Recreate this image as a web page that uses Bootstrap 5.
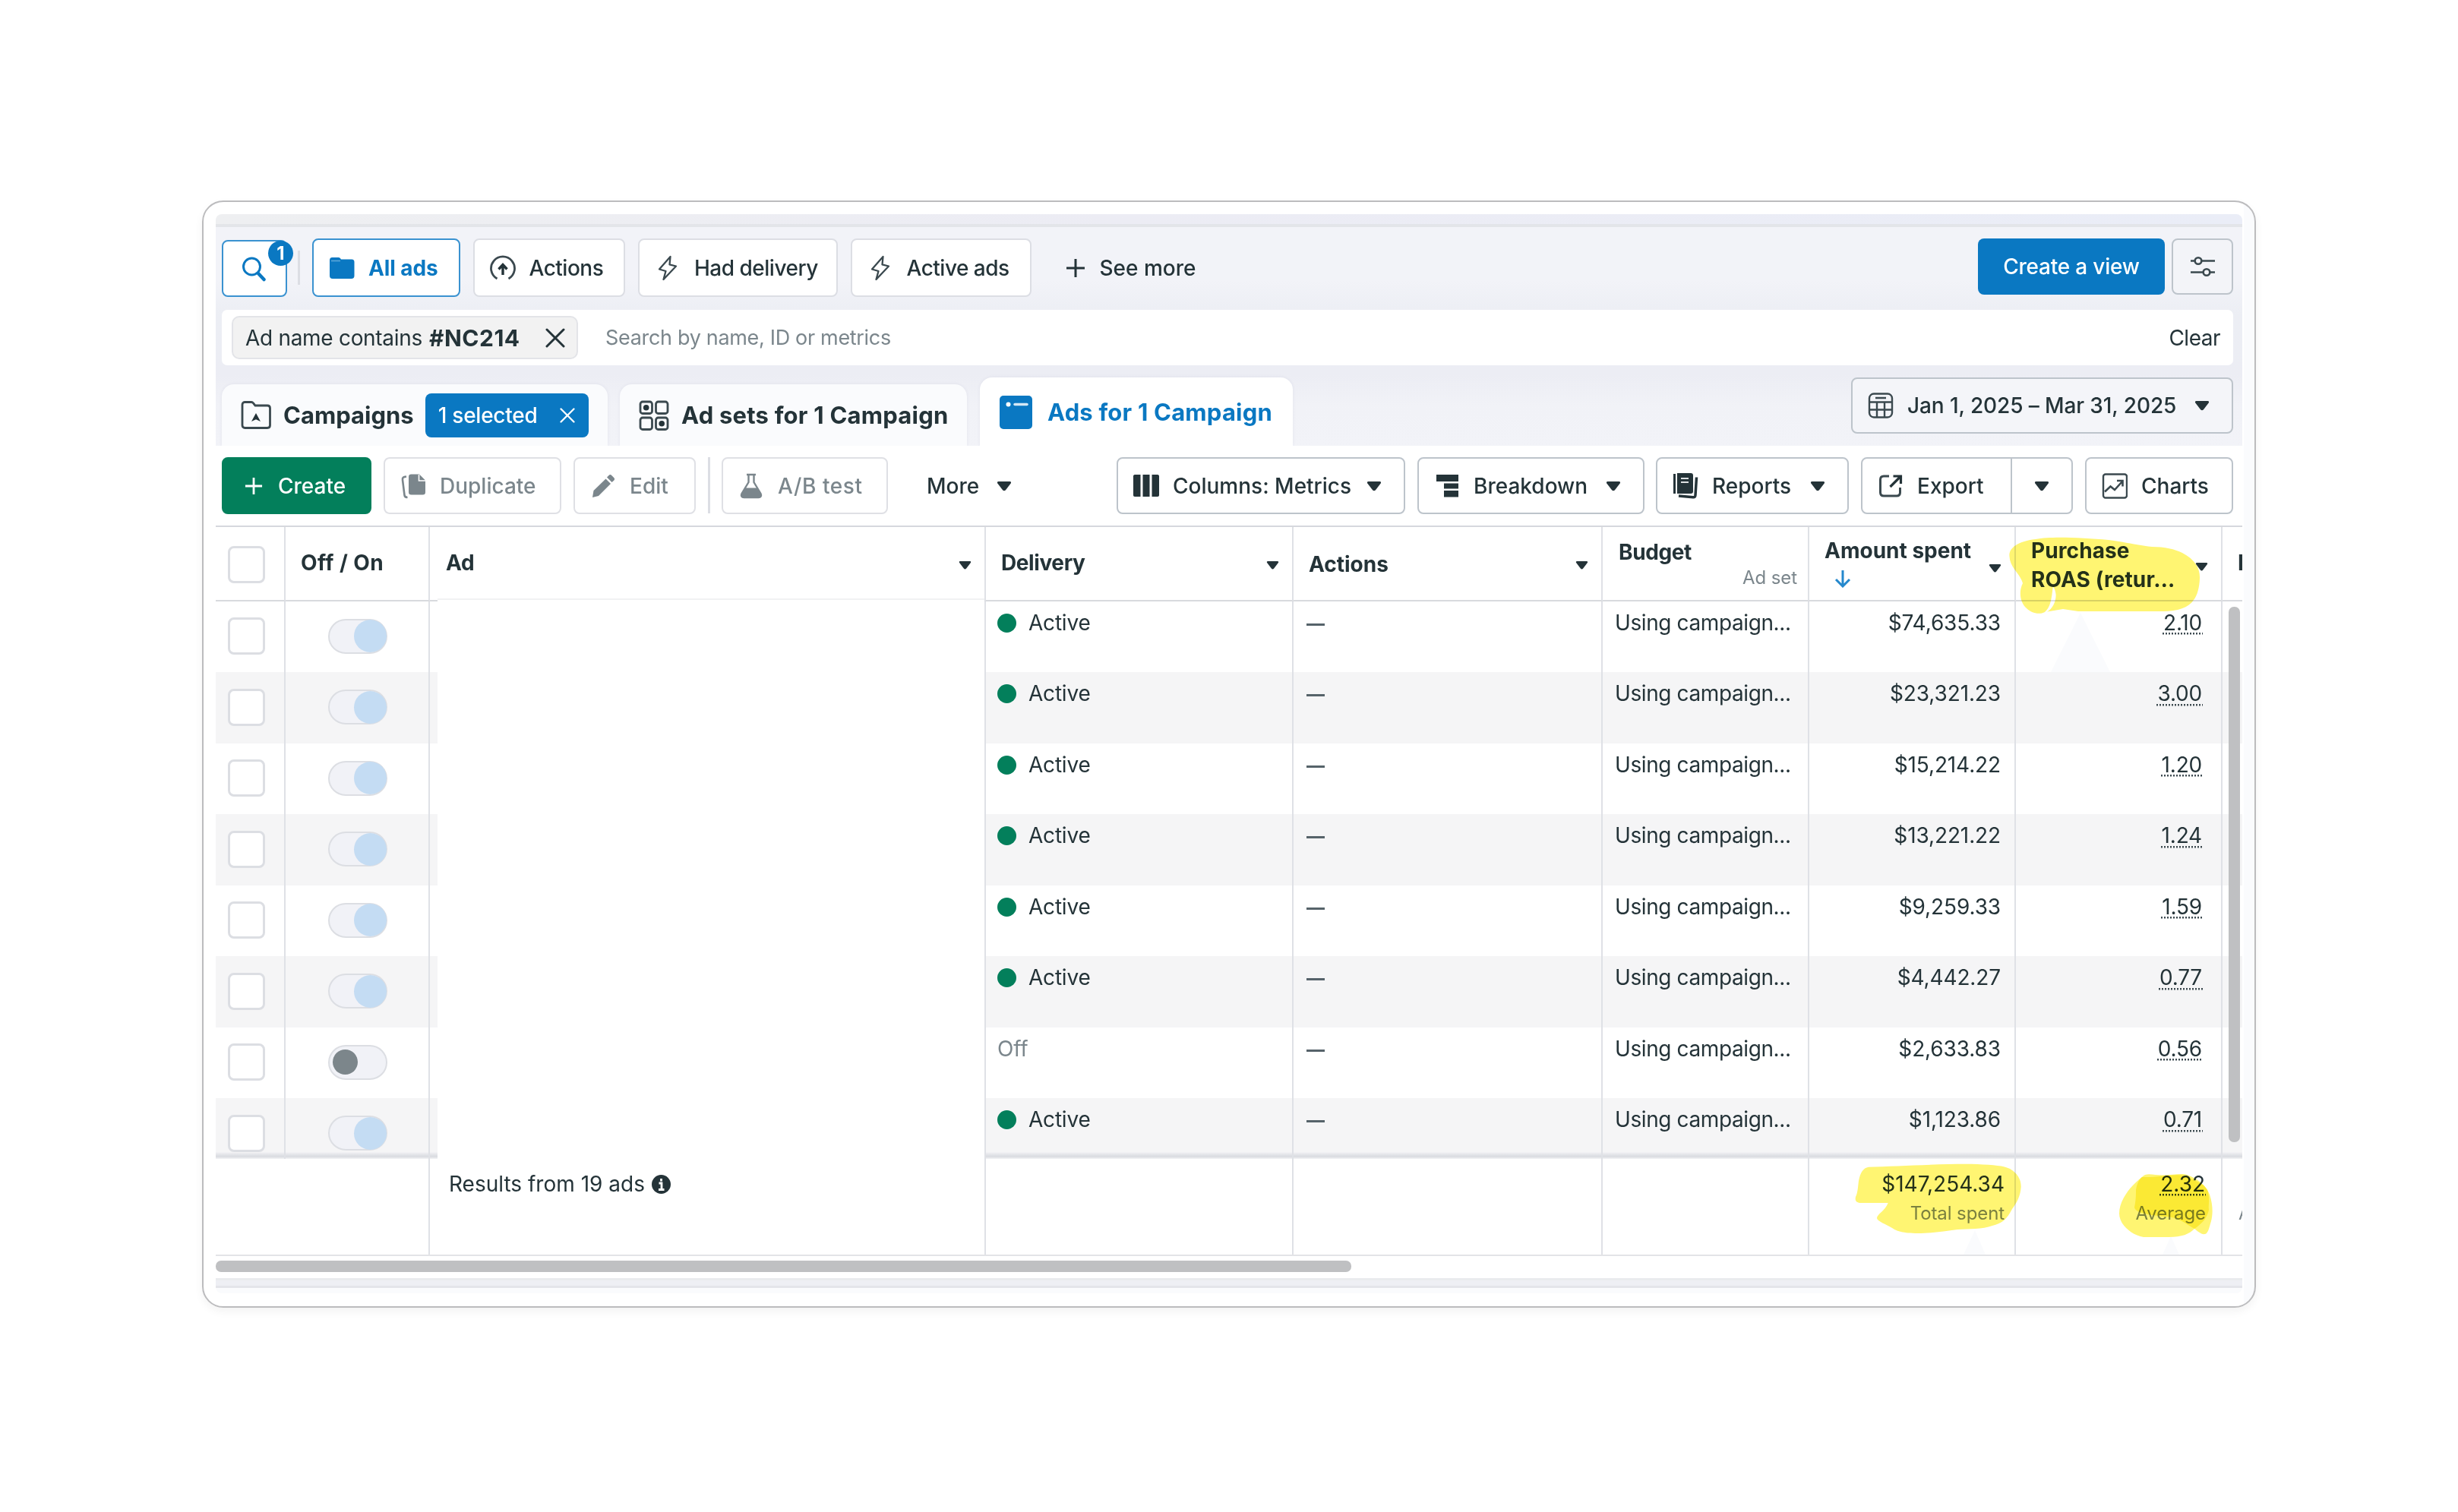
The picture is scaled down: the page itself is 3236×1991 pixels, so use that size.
<!DOCTYPE html>
<html lang="en">
<head>
<meta charset="utf-8">
<meta name="viewport" content="width=device-width, initial-scale=1">
<title>Ads Manager</title>
<link rel="stylesheet" href="https://cdn.jsdelivr.net/npm/bootstrap@5.3.0/dist/css/bootstrap.min.css">
<style>
  :root { --ink:#243338; --soft:#7b868c; --blue:#0a78c2; --green:#037f5b; --line:#dfe1e6; }
  body { background:#fff; color:var(--ink); font:400 28px/28px Inter,"Liberation Sans",sans-serif; padding-top:264px; overflow:hidden; height:1991px; }
  .frame { width:2704px; height:1458px; margin-left:266px; border:2px solid #bcbcbe; border-radius:28px; padding:16px; background:linear-gradient(90deg,#fff 2686px,#fafbfd 2686px); box-shadow:0 5px 12px rgba(0,0,0,.05); }
  .shot { width:2668px; height:1421px; border-radius:8px; background:#fff; white-space:nowrap; }
  .strip { height:17px; background:linear-gradient(90deg,#eeeff1,#ececf4 45%,#eaedf7); border-bottom:4px solid #e3e5e9; }
  .head-zone { height:288px; padding:15px 12px 0 8px; background:linear-gradient(#f2f3f8 0,#f2f3f8 70px,#eceef4 115px,#ecedf4 195px,#f1f2f7 235px,#f2f3f8); }
  .tool { height:75px; padding:0 20px; border:2px solid #bdc4cb; border-radius:8px; background:#fff; font-weight:500; display:flex; align-items:center; flex:none; color:var(--ink); }
  .tool > svg:not(.caret) { width:34px; height:34px; flex:none; margin-right:18px; }
  .pale { border-color:#dcdee4; }
  .off-tool { border-color:#dfe0e5; color:var(--soft); }
  .tight { letter-spacing:-.5px; }
  .caret { width:20px; height:14px; flex:none; margin-left:auto; margin-right:9px; }
  .caret-sm { width:17px; height:12px; }
  .views .tool { height:77px; }
  .search-tool { width:86px; margin-top:2px; border-color:#3a92d0; padding:0; justify-content:center; }
  .views .search-tool { height:75px; }
  .search-tool > svg:not(.caret) { margin:0 2px 0 0; }
  .count-dot { left:59px; top:-1px; width:33px; height:33px; line-height:33px; background:var(--blue); color:#fff; font-weight:700; font-size:24px; }
  .vline { width:3px; background:#dcdee4; flex:none; }
  .tall { height:74px; }
  .after-search { margin:16px 16px 16px 14px; }
  .w-all { width:195px; margin-right:16.5px; border-color:#3a92d0; color:var(--blue); font-weight:700; letter-spacing:-.1px; }
  .w-act { width:200.5px; margin-right:17px; } .w-had { width:263px; margin-right:16.5px; } .w-ads { width:238px; }
  .see-more { height:77px; font-weight:500; margin-left:45px; }
  .see-more svg { width:26px; height:26px; margin-right:19px; }
  .view-btn { width:246px; height:74px; background:var(--blue); color:#fff; border-radius:8px; font-weight:500; letter-spacing:-.2px; }
  .views .slide-btn { width:81px; height:74px; margin-left:9px; background:#f3f4f8; padding:0; justify-content:center; }
  .slide-btn > svg:not(.caret) { margin:0; }
  .filterbar { height:73px; margin-top:17px; background:#fff; border-radius:7px; padding:0 17px 0 13px; }
  .chip { width:456px; height:57px; background:#f2f2f2; border:2px solid #e3e4e8; border-radius:10px; padding:0 15px 0 16px; letter-spacing:-.3px; }
  .chip b { font-size:30px; letter-spacing:.5px; font-weight:700; margin-left:9px; }
  .chip svg { width:26px; height:26px; margin-left:auto; }
  .hint { font-size:27px; letter-spacing:-.32px; color:var(--soft); margin-left:36px; }
  .tabrow { height:90px; margin-top:16px; }
  .tab { height:81px; background:#fafbfd; border-radius:16px 16px 0 0; font-weight:700; font-size:31px; flex:none; box-shadow:0 0 4px rgba(60,70,110,.08); clip-path:inset(-4px -4px 0 -4px); }
  .tab-a { width:508px; padding-left:24px; margin-right:16px; } .tab-a > svg { width:42px; height:40px; margin-right:15px; }
  .tab-b { width:457px; padding-left:24px; margin-right:17px; letter-spacing:.22px; } .tab-b > svg { width:42px; height:42px; margin-right:15px; }
  .tab-c { width:412px; height:90px; background:#fff; color:var(--blue); padding:1px 0 0 26px; letter-spacing:.2px; } .tab-c > svg { width:43px; height:44px; margin-right:20px; }
  .pill { width:215px; height:58px; margin-left:15px; background:var(--blue); color:#fff; border-radius:8px; font-size:28px; font-weight:500; letter-spacing:-.25px; padding:0 18px 0 17px; }
  .pill svg { width:20px; height:20px; margin-left:auto; }
  .date-tool { width:503px; height:74px; background:#f4f5f9; letter-spacing:-.1px; }
  .toolbar-row { height:107px; padding:15px 12px 0 8px; border-bottom:2px solid #d6d8dd; border-radius:8px 8px 0 0; background:#fff; margin-top:0; }
  .w-create { width:197px; background:var(--green); border-color:var(--green); color:#fff; margin-right:16px; }
  .w-create > svg:not(.caret) { width:24px; height:24px; margin:0 20px 0 8px; }
  .w-dup { width:234px; margin-right:16px; } .w-edit { width:161px; margin-right:16px; } .w-ab { width:219px; margin-left:15px; letter-spacing:.6px; }
  .more { width:150px; height:75px; margin-left:51px; font-weight:500; } .more .caret { margin-left:23px; margin-right:0; }
  .w-col { width:380px; margin-right:16px; } .w-brk { width:299px; margin-right:15px; } .w-rep { width:254px; margin-right:16px; }
  .w-exp { width:199px; border-radius:8px 0 0 8px; } .w-expc { width:82px; border-radius:0 8px 8px 0; margin-left:-2px; margin-right:16px; padding:0; justify-content:center; } .w-expc .caret { margin:0; } .w-chart { width:195px; }
  .grid-row { height:93.5px; }
  .grid-row:nth-child(odd) { background:#f5f5f6; }
  .hd.grid-row { height:97.5px; background:#fff; font-weight:700; }
  .cellx { border-right:2px solid var(--line); flex:none; position:relative; padding:14px 16px 0 16px; letter-spacing:-.2px; }
  .hd .cellx { border-bottom:2px solid #d8dade; padding-top:33px; padding-left:20px; }
  .c1 { width:92px; } .c2 { width:190px; } .c3 { width:732px; } .c4 { width:405px; } .c5 { width:407px; } .c6,.c7,.c8 { width:272px; } .c9 { width:26px; border-right:0; overflow:hidden; }
  .grid-row .c1 { padding:21.5px 0 0 16px; } .hd.grid-row .c1 { padding-top:25px; }
  .tick { width:49px; height:49px; border:3px solid #dcdee3; border-radius:8px; background:#fff; }
  .grid-row .c2 { padding:23px 0 0 56px; } .hd.grid-row .c2 { padding:33px 0 0 20px; letter-spacing:.4px; }
  .switchx { width:78px; height:46px; border:2px solid #dcdee3; border-radius:23px; background:#f1f2f7; position:relative; }
  .switchx i { position:absolute; width:43px; height:43px; border-radius:50%; background:#c4dcf3; right:-1px; top:-.5px; }
  .switchx.is-off i { width:33px; height:33px; left:4px; top:4.5px; right:auto; background:#7c868b; }
  .grid-row .c3 { padding:0 0 0 10px; } .hd.grid-row .c3 { padding:33px 0 0 21px; }
  .blank { background:#fff; height:100%; }
  .first .blank { margin-top:-4px; height:calc(100% + 4px); border-top:2px solid #f1f2f3; position:relative; }
  .hd .caret { position:absolute; right:17px; top:44px; margin:0; }
  .statdot { width:25px; height:25px; border-radius:50%; background:var(--green); display:inline-block; margin-right:16px; vertical-align:-3px; }
  .grid-row .c4 { padding-left:15px; } .hd.grid-row .c4 { padding-left:20px; letter-spacing:-.4px; }
  .muted { color:var(--soft); }
  .dashx { width:24px; height:3px; background:#56636a; margin:15px 0 0 1px; }
  .c5 { padding-left:16px; } .hd.grid-row .c5 { padding:35px 0 0 20px; letter-spacing:0; }
  .c6 { letter-spacing:-.4px; } .hd.grid-row .c6 { padding:19px 14px 0 21px; }
  .sub { font-size:24px; line-height:24px; margin-top:13px; color:var(--soft); font-weight:400; letter-spacing:-.1px; }
  .hd .sub { margin-top:8px; }
  .c7,.c8 { text-align:right; } .grid-row .c7 { padding-right:18px; letter-spacing:-.12px; } .grid-row .c8 { padding-right:24px; }
  .hd.grid-row .c7,.hd.grid-row .c8 { text-align:left; padding:12px 0 0 20px; line-height:38px; letter-spacing:0; }
  .hd.grid-row .c8 { letter-spacing:.1px; }
  .hd.grid-row .c7 .caret { top:48px; } .hd.grid-row .c8 .caret { top:46px; right:17px; }
  .sortx { width:22px; height:24px; position:absolute; left:33px; top:56px; }
  .dots { background:repeating-linear-gradient(90deg,#3e4b51 0 2px,transparent 2px 4px) 0 calc(100% - 1px)/100% 2.500px no-repeat; padding:0 1px; }
  .grid-row.last { height:80px; background:linear-gradient(#f5f5f6 0 71px,#e9eaee 73px,#d9dbe0 77px,#f3f4f6); }
  .totals { height:128px; border-bottom:2px solid #e3e4e7; }
  .totals .cellx { padding-top:18.5px; letter-spacing:0; }
  .totals .c1 { border:0; } .totals .c3 { padding-left:25px; } .totals .c7 { padding-right:13px; } .totals .c8 { padding-right:20px; } .totals .c9 { padding-left:21px; }
  .info { width:25px; height:25px; vertical-align:-3px; margin-left:1px; }
  .hscroll { width:1495px; height:15px; margin-top:6px; border-radius:7px; background:#bfc0c2; }
  .base1 { margin-top:8px; height:13px; background:#eeeff4; border-bottom:3px solid #e4e5ea; border-top:3px solid #eaebee; }
  .base2 { height:7px; background:#fafbfd; }
  .vscroll { left:2650px; top:517px; width:15px; height:705px; border-radius:7px; background:#bfc0c2; }
  .marker { left:0; top:0; width:2668px; height:1421px; mix-blend-mode:multiply; pointer-events:none; }
</style>
</head>
<body>
<svg width="0" height="0" class="position-absolute">
  <symbol id="tri" viewBox="0 0 20 14"><path d="M2.5 1h15c1.500 0 2 1.300 1.200 2.400L12 12.200c-1.200 1.500-2.800 1.500-4 0L1.300 3.400C.5 2.300 1 1 2.500 1z" fill="#243338"/></symbol>
  <symbol id="bolt" viewBox="0 0 34 34"><path d="M20.500 2 6 18.500l8.500 2.500L11.500 32 28 14.500l-8.500-2.200z" fill="none" stroke="#3b494f" stroke-width="2.300" stroke-linejoin="round"/></symbol>
  <symbol id="ex" viewBox="0 0 26 26"><path d="M2 2l22 22M24 2 2 24" fill="none" stroke="currentColor" stroke-width="3" stroke-linecap="round"/></symbol>
  <symbol id="plus" viewBox="0 0 26 26"><path d="M13 1v24M1 13h24" fill="none" stroke="currentColor" stroke-width="3"/></symbol>
</svg>

<main class="frame">
 <div class="shot position-relative overflow-hidden">
  <div class="strip"></div>
  <header class="head-zone">
    <div class="views d-flex">
      <div class="tool search-tool position-relative">
        <svg viewBox="0 0 34 34"><circle cx="14.500" cy="14" r="11" fill="none" stroke="#0a78c2" stroke-width="3"/><path d="M23 23 30.500 31" stroke="#0a78c2" stroke-width="4.500" stroke-linecap="round"/></svg>
        <span class="count-dot position-absolute rounded-circle text-center">1</span>
      </div>
      <span class="vline after-search"></span>
      <div class="tool w-all"><svg viewBox="0 0 34 34"><path d="M1 7c0-2.500 1-4 3.500-4h8c2 0 2.500 1 3.500 2.500H30c2.500 0 3.500 1.200 3.500 3.500v18c0 2.500-1.200 4-4 4H5c-2.800 0-4-1.500-4-4z" fill="#0a78c2"/><path d="M3 7.500h12" stroke="#5fa8da" stroke-width="1.500"/></svg>All ads</div>
      <div class="tool pale tight w-act"><svg viewBox="0 0 34 34"><path d="M9.500 31A15.500 15.500 0 1 1 24.500 31" fill="none" stroke="#3b494f" stroke-width="2.800"/><path d="M17 26V13M11.500 18.500 17 12.500l5.500 6" fill="none" stroke="#243338" stroke-width="3.400"/></svg>Actions</div>
      <div class="tool pale tight w-had"><svg><use href="#bolt"/></svg>Had delivery</div>
      <div class="tool pale tight w-ads"><svg><use href="#bolt"/></svg>Active ads</div>
      <div class="see-more d-flex align-items-center"><svg><use href="#plus"/></svg>See more</div>
      <div class="view-btn ms-auto d-flex align-items-center justify-content-center">Create a view</div>
      <div class="tool slide-btn"><svg viewBox="0 0 34 34"><g fill="none" stroke="#3b494f" stroke-width="2.600"><path d="M1 9.500h5M16 9.500h17M1 24.500h16M27 24.500h6"/><circle cx="11" cy="9.500" r="4.300"/><circle cx="22" cy="24.500" r="4.300"/></g></svg></div>
    </div>
    <div class="filterbar d-flex align-items-center">
      <div class="chip d-flex align-items-center">Ad name contains<b>#NC214</b><svg><use href="#ex"/></svg></div>
      <span class="hint">Search by name, ID or metrics</span>
      <span class="ms-auto tight">Clear</span>
    </div>
    <div class="tabrow d-flex align-items-end">
      <div class="tab tab-a d-flex align-items-center">
        <svg viewBox="0 0 42 40"><path d="M3 33V6c0-2 1-3.500 3-3.500h9c1.500 0 2 .8 3 2l2 2.500h16c2 0 3.500 1.300 3.500 3.500V33c0 2-1.300 3.500-3.500 3.500H6.500C4.300 36.500 3 35 3 33z" fill="none" stroke="#3b494f" stroke-width="2.800"/><path d="M21 17l6 11-6-2.800-6 2.800z" fill="#243338"/></svg>
        <span>Campaigns</span>
        <div class="pill d-flex align-items-center">1 selected<svg viewBox="0 0 26 26"><use href="#ex"/></svg></div>
      </div>
      <div class="tab tab-b d-flex align-items-center">
        <svg viewBox="0 0 42 42"><g fill="none" stroke="#3b494f" stroke-width="2.800"><rect x="3" y="3" width="15.500" height="15.500" rx="3"/><rect x="23.500" y="3" width="15.500" height="15.500" rx="3"/><rect x="3" y="24" width="15.500" height="15.500" rx="3"/><rect x="23.500" y="24" width="15.500" height="15.500" rx="3"/></g><circle cx="10.700" cy="10.700" r="3.800" fill="#243338"/><circle cx="31.200" cy="31.700" r="3.800" fill="#243338"/></svg>
        <span>Ad sets for 1 Campaign</span>
      </div>
      <div class="tab tab-c d-flex align-items-center">
        <svg viewBox="0 0 43 44"><rect width="43" height="44" rx="5" fill="#0a78c2"/><circle cx="11.500" cy="11.500" r="3" fill="#fff"/><path d="M20 11.500h16" stroke="#d5e8f6" stroke-width="3.500" stroke-linecap="round"/></svg>
        <span>Ads for 1 Campaign</span>
      </div>
      <div class="tool date-tool ms-auto align-self-start"><svg viewBox="0 0 34 34"><g fill="none" stroke="#3b494f" stroke-width="2.400"><rect x="2" y="1.500" width="30" height="31" rx="6"/><path d="M2 12.500h30M2 22.500h30M12 12.500v20M22 12.500v20M10 7h14"/></g></svg>Jan 1, 2025 – Mar 31, 2025<svg class="caret"><use href="#tri"/></svg></div>
    </div>
  </header>

  <nav class="toolbar-row d-flex">
    <div class="tool w-create"><svg viewBox="0 0 26 26"><use href="#plus"/></svg>Create</div>
    <div class="tool off-tool w-dup"><svg viewBox="0 0 34 34"><path d="M8 4.500C4 5 2.500 6 3 9l2.500 20c.3 2.300 1.500 3 4 2.800" fill="none" stroke="#7b868c" stroke-width="2.600"/><path d="M14.500 1.500H25l8 8V25c0 2.500-1 3.500-3.500 3.500h-15c-2.500 0-3.500-1-3.500-3.500V5c0-2.500 1-3.500 3.500-3.500z" fill="#7b868c"/><path d="M24.500 2v8H33" fill="none" stroke="#fff" stroke-width="1.600"/></svg>Duplicate</div>
    <div class="tool off-tool w-edit"><svg viewBox="0 0 34 34"><path d="M3 32l1.500-9L20.500 7.500l6.500 6.500L11 30z" fill="#7b868c"/><path d="M22 5.500l2.500-2.500c1.200-1.200 2.500-1.200 3.700 0l3 3c1.200 1.200 1.200 2.500 0 3.700L28.500 12z" fill="#7b868c"/></svg>Edit</div>
    <span class="vline tall"></span>
    <div class="tool off-tool w-ab"><svg viewBox="0 0 34 34"><path d="M11 2h12M13.500 2v10L4.500 27c-1.500 3 0 5 3 5h19c3 0 4.500-2 3-5l-9-15V2" fill="none" stroke="#7b868c" stroke-width="2.400"/><path d="M9.500 19.500h15L30 28c.5 2.500-.5 4-3 4H7c-2.500 0-3.500-1.500-3-4z" fill="#7b868c"/></svg>A/B test</div>
    <div class="more d-flex align-items-center">More<svg class="caret"><use href="#tri"/></svg></div>
    <div class="tool w-col ms-auto"><svg viewBox="0 0 34 34"><path d="M0 4c0-1 .7-2 2-2h7.500v29H2c-1.300 0-2-1-2-2zM12.500 2h9v29h-9zM24.500 2H32c1.300 0 2 1 2 2v25c0 1-.7 2-2 2h-7.500z" fill="#243338"/></svg>Columns: Metrics<svg class="caret"><use href="#tri"/></svg></div>
    <div class="tool w-brk"><svg viewBox="0 0 34 34"><path d="M3 2h29v9H3zM13 13.500h19v7H13zM13 23h19v8.500H13z" fill="#243338"/></svg>Breakdown<svg class="caret"><use href="#tri"/></svg></div>
    <div class="tool w-rep"><svg viewBox="0 0 34 34"><path d="M2.500 1v26" stroke="#243338" stroke-width="3"/><path d="M6 0h18c2 0 3 1 3 3v21c0 2-1 3-3 3H6z" fill="#243338"/><path d="M11 7h10M11 12h10" stroke="#dde1e3" stroke-width="2.200"/><path d="M31.500 5.500 30 29c-.1 2-1 3-3 2.800L8 30" fill="none" stroke="#243338" stroke-width="3.500"/></svg>Reports<svg class="caret"><use href="#tri"/></svg></div>
    <div class="tool w-exp"><svg viewBox="0 0 34 34"><path d="M15 4H8C5 4 3.500 5.500 3.500 8.500v17c0 3 1.500 4.500 4.500 4.500h17c3 0 4.500-1.500 4.500-4.500V19" fill="none" stroke="#3b494f" stroke-width="3"/><path d="M16.500 18 30 4.500M20.500 4H30.500v10" fill="none" stroke="#243338" stroke-width="3.200"/></svg>Export</div>
    <div class="tool w-expc"><svg class="caret"><use href="#tri"/></svg></div>
    <div class="tool w-chart"><svg viewBox="0 0 34 34"><rect x="2" y="1.500" width="31" height="31" rx="3" fill="none" stroke="#3b494f" stroke-width="2.400"/><path d="M4 24.500l7.500-7 5.500 4.500L27 11M20 10h7.500v7.500" fill="none" stroke="#3b494f" stroke-width="2.600"/></svg>Charts</div>
  </nav>

  <section id="grid">
    <div class="grid-row hd d-flex">
      <div class="cellx c1"><div class="tick"></div></div>
      <div class="cellx c2">Off / On</div>
      <div class="cellx c3">Ad<svg class="caret caret-sm" viewBox="0 0 20 14"><use href="#tri"/></svg></div>
      <div class="cellx c4">Delivery<svg class="caret caret-sm" viewBox="0 0 20 14"><use href="#tri"/></svg></div>
      <div class="cellx c5">Actions<svg class="caret caret-sm" viewBox="0 0 20 14"><use href="#tri"/></svg></div>
      <div class="cellx c6">Budget<div class="sub text-end">Ad set</div></div>
      <div class="cellx c7">Amount spent<svg class="sortx" viewBox="0 0 22 24"><path d="M11 1v21M2 13l9 9 9-9" fill="none" stroke="#2588cd" stroke-width="3"/></svg><svg class="caret caret-sm" viewBox="0 0 20 14"><use href="#tri"/></svg></div>
      <div class="cellx c8">Purchase<br>ROAS (retur…<svg class="caret caret-sm" viewBox="0 0 20 14"><use href="#tri"/></svg></div>
      <div class="cellx c9">I</div>
    </div>
  </section>

  <footer class="totals d-flex">
    <div class="cellx c1"></div><div class="cellx c2"></div>
    <div class="cellx c3">Results from 19 ads <svg class="info" viewBox="0 0 25 25"><circle cx="12.500" cy="12.500" r="12.500" fill="#243338"/><path d="M12.500 5v3.500M9.500 11h3.500v8M9 19.500h7.500" stroke="#fff" stroke-width="2.800" fill="none"/></svg></div>
    <div class="cellx c4"></div><div class="cellx c5"></div><div class="cellx c6"></div>
    <div class="cellx c7">$147,254.34<div class="sub">Total spent</div></div>
    <div class="cellx c8"><span class="dots">2.32</span><div class="sub">Average</div></div>
    <div class="cellx c9"><div>&nbsp;</div><div class="sub">A</div></div>
  </footer>
  <div class="hscroll"></div>
  <div class="base1"></div>
  <div class="base2"></div>
  <div class="vscroll position-absolute"></div>

  <!-- highlighter strokes over the key figures -->
  <svg class="marker position-absolute" viewBox="284 282 2668 1421">
    <path d="M2739 807l39 78h-78zM2600 1620l14 32h-29zM2858 1628l11 24h-22z" fill="#fafbfd"/>
    <path fill="#fff572" d="M2645.400 732C2645 722 2655 713 2680 710C2700 706 2740 708 2776 711C2800 714 2815 718 2833 720C2850 720 2863 723 2873 728C2890 737 2896 748 2896 760C2896 772 2893 784 2888 790C2882 800 2866 805 2848 805H2736L2716 802L2695 805.500C2702 802 2707 792 2706.600 783C2706 777 2704 773 2702.600 773C2701 790 2699 800 2692 806C2684 810 2674 807 2668 801C2660 794 2657 780 2663 768C2659 754 2646 748 2645.400 732z"/>
    <path fill="#fff572" d="M2460 1536.700C2500 1536 2560 1532 2603 1533C2625 1534 2638 1535 2646 1539C2656 1545 2661 1553 2660.700 1563C2660 1575 2655 1584 2649 1592C2642 1606 2635 1611 2623 1614C2610 1619 2592 1618 2577 1619C2560 1621 2545 1624 2525 1624C2505 1624 2497 1621 2491 1617C2483 1612 2471 1608 2471 1604C2471 1599 2482 1594 2485.700 1584H2450C2443 1584 2442 1580 2443 1576C2446 1570 2446 1562 2447 1555C2449 1544 2453 1538 2460 1536.700z"/>
    <path fill="#fff572" d="M2790 1598C2790 1582 2802 1564 2820 1550C2824 1545 2830 1546 2838 1547C2855 1549 2870 1544 2879 1547C2893 1552 2904 1560 2909 1573C2914 1588 2913 1600 2911 1608C2908 1618 2907 1624 2903 1625C2898 1626 2893 1621 2889 1618C2882 1625 2873 1629 2855 1629H2822C2805 1626 2790 1612 2790 1598z"/>
    <path fill="#fbe934" d="M2820 1550C2840 1551 2860 1545 2876 1548C2892 1556 2901 1558 2906 1567C2910 1580 2907 1586 2908 1593C2906 1604 2898 1612 2889 1618C2878 1612 2868 1602 2850 1602C2832 1600 2812 1598 2810 1590C2812 1580 2812 1574 2812 1567C2813 1560 2816 1553 2820 1550z"/>
  </svg>
 </div>
</main>

<script>
  const ads = [
    ["Active", "$74,635.33", "2.10"], ["Active", "$23,321.23", "3.00"],
    ["Active", "$15,214.22", "1.20"], ["Active", "$13,221.22", "1.24"],
    ["Active", "$9,259.33", "1.59"], ["Active", "$4,442.27", "0.77"],
    ["Off", "$2,633.83", "0.56"], ["Active", "$1,123.86", "0.71"]
  ];
  document.getElementById("grid").insertAdjacentHTML("beforeend", ads.map(([state, spent, roas], i) => `
    <div class="grid-row d-flex ${i === 0 ? "first" : ""} ${i === ads.length - 1 ? "last" : ""}">
      <div class="cellx c1"><div class="tick"></div></div>
      <div class="cellx c2"><div class="switchx ${state === "Off" ? "is-off" : ""}"><i></i></div></div>
      <div class="cellx c3"><div class="blank"></div></div>
      <div class="cellx c4">${state === "Off" ? '<span class="muted">Off</span>' : '<span class="statdot"></span>Active'}</div>
      <div class="cellx c5"><div class="dashx"></div></div>
      <div class="cellx c6">Using campaign...</div>
      <div class="cellx c7">${spent}</div>
      <div class="cellx c8"><span class="dots">${roas}</span></div>
      <div class="cellx c9"></div>
    </div>`).join(""));
</script>
<script src="https://cdn.jsdelivr.net/npm/bootstrap@5.3.0/dist/js/bootstrap.bundle.min.js"></script>
</body>
</html>
